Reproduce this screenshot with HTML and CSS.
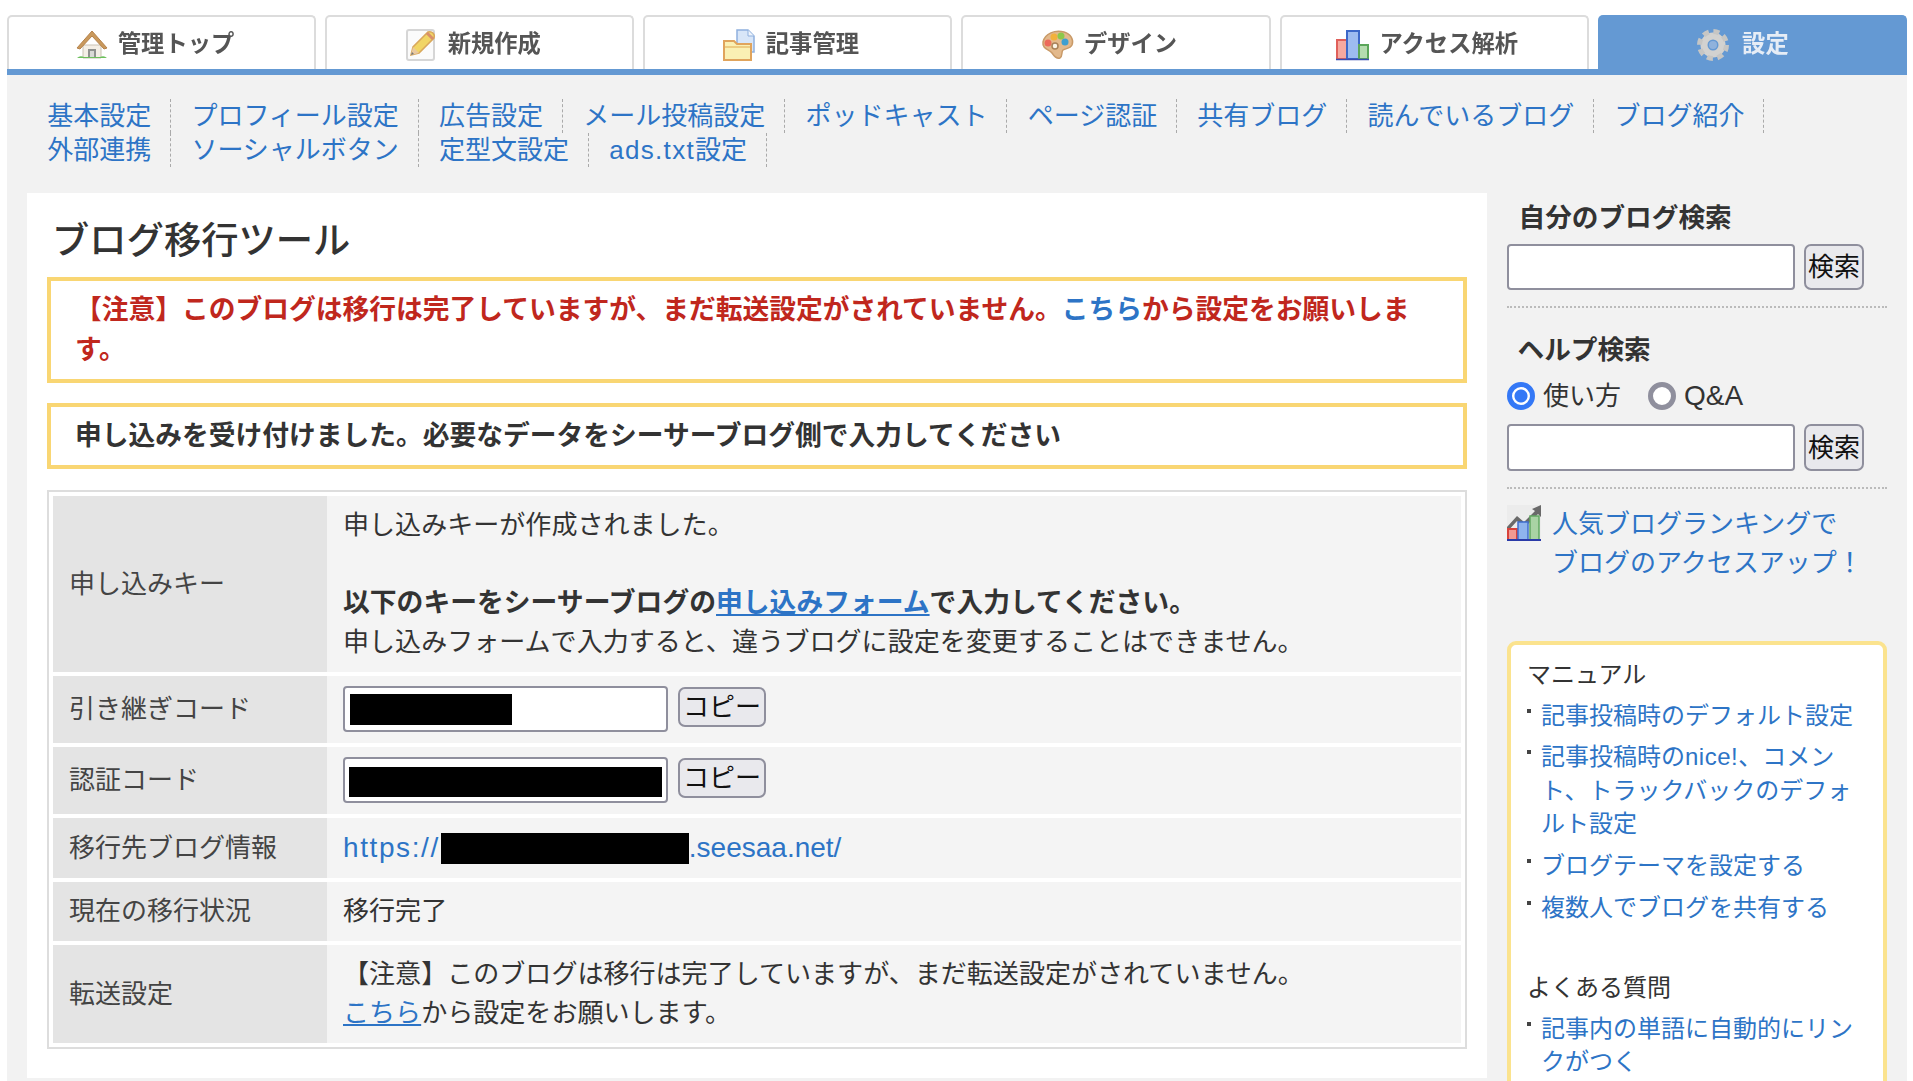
FILE: index.html
```html
<!DOCTYPE html>
<html lang="ja">
<head>
<meta charset="utf-8">
<title>ブログ移行ツール</title>
<link rel="stylesheet" href="styles.css">
</head>
<body>
<div class="page">
  <nav class="tabs">
    <a class="tab">
      <svg class="tab-icon" viewBox="6 3 34 34"><path d="M14 20h18v13H14z" fill="#f4efe6" stroke="#c9c2b4"/><path d="M19 24h8v9h-8z" fill="#8f918e"/><path d="M21 26h4v7h-4z" fill="#d9dad6"/><path d="M8 23 23 6l15 17-3 1-12-13-12 13z" fill="#c9995c" stroke="#b5814a"/><path d="M8 33q3-3 7-1h16q4-2 7 1z" fill="#6bbf5a"/></svg>
      <span>管理トップ</span>
    </a>
    <a class="tab">
      <svg class="tab-icon" viewBox="6 3 34 34"><rect x="8" y="5" width="27" height="30" rx="2" fill="#fbfbfb" stroke="#d6d6d6" stroke-width="2"/><path d="M12 30l2-8 15-15q3-1 5 1t1 5L20 28z" fill="#f1d565" stroke="#d9a85c" stroke-width="1.5"/><path d="M12 30l2-8 6 6z" fill="#e9c9a0"/><path d="M12 30l1-3 2 2z" fill="#777"/><path d="M28 8l6 6" stroke="#d98f6a" stroke-width="3"/></svg>
      <span>新規作成</span>
    </a>
    <a class="tab">
      <svg class="tab-icon" viewBox="4 3 34 34"><path d="M18 5h11l6 6v16H18z" fill="#d8e6f8" stroke="#8fb0de" stroke-width="1.5"/><path d="M29 5v6h6" fill="#eef4fc" stroke="#8fb0de"/><path d="M5 16h10l3 3h14v16H5z" fill="#faf0b4" stroke="#e0a45c" stroke-width="2"/><path d="M6 22h25" stroke="#e8c070" stroke-width="1.5"/></svg>
      <span>記事管理</span>
    </a>
    <a class="tab">
      <svg class="tab-icon" viewBox="6 3 34 34"><path d="M8 17C10 8 20 5 29 7c7 2 10 8 8 13-2 4-6 3-9 5-2 2 0 6-3 8-3 1-6-2-8-5-3-4-10-4-9-11z" fill="#e3b98c" stroke="#c99a68" stroke-width="1.5"/><circle cx="13" cy="18" r="3.5" fill="#ec6a5a"/><circle cx="19" cy="12" r="3.5" fill="#f3b13c"/><circle cx="26" cy="11" r="3.5" fill="#8cc84b"/><circle cx="30" cy="17" r="3.5" fill="#3f9fd0"/><circle cx="20" cy="21" r="3" fill="#faf3e6" stroke="#a88058" stroke-width="1.5"/></svg>
      <span>デザイン</span>
    </a>
    <a class="tab">
      <svg class="tab-icon" viewBox="4 3 34 34"><rect x="5" y="15" width="10" height="19" fill="#f6a9a0" stroke="#e0605a" stroke-width="2"/><rect x="15" y="6" width="12" height="28" fill="#9dbcf0" stroke="#3c68c8" stroke-width="2"/><rect x="27" y="20" width="9" height="14" fill="#b4dcb0" stroke="#5aa65a" stroke-width="2"/><path d="M4 34.500h33" stroke="#3a4cb0" stroke-width="1.500"/></svg>
      <span>アクセス解析</span>
    </a>
    <a class="tab tab-active">
      <svg class="tab-icon" viewBox="0 0 34 34"><circle cx="17" cy="17" r="9" fill="none" stroke="#d2d2d0" stroke-width="7"/><circle cx="17" cy="17" r="13.500" fill="none" stroke="#c6c6c4" stroke-width="5" stroke-dasharray="6 4.600"/><circle cx="17" cy="17" r="4" fill="#8fb2dc"/></svg>
      <span>設定</span>
    </a>
  </nav>
  <div class="body">
    <ul class="subnav">
      <li><a>基本設定</a></li>
      <li><a>プロフィール設定</a></li>
      <li><a>広告設定</a></li>
      <li><a>メール投稿設定</a></li>
      <li><a>ポッドキャスト</a></li>
      <li><a>ページ認証</a></li>
      <li><a>共有ブログ</a></li>
      <li><a>読んでいるブログ</a></li>
      <li><a>ブログ紹介</a></li>
      <li><a>外部連携</a></li>
      <li><a>ソーシャルボタン</a></li>
      <li><a>定型文設定</a></li>
      <li><a><span class="latin-ads">ads.txt</span>設定</a></li>
    </ul>
    <div class="columns">
      <main class="card">
        <h1 class="title">ブログ移行ツール</h1>
        <p class="alert alert-error">【注意】このブログは移行は完了していますが、まだ転送設定がされていません。<a>こちら</a>から設定をお願いします。</p>
        <p class="alert alert-info">申し込みを受け付けました。必要なデータをシーサーブログ側で入力してください</p>
        <table class="info">
          <tr>
            <th>申し込みキー</th>
            <td>申し込みキーが作成されました。<br><br><strong>以下のキーをシーサーブログの<a class="ul">申し込みフォーム</a>で入力してください。</strong><br>申し込みフォームで入力すると、違うブログに設定を変更することはできません。</td>
          </tr>
          <tr class="code-row">
            <th>引き継ぎコード</th>
            <td><div class="code"><div class="field"><span class="mask mask-short"></span></div><button class="btn btn-copy">コピー</button></div></td>
          </tr>
          <tr class="code-row">
            <th>認証コード</th>
            <td><div class="code"><div class="field"><span class="mask mask-long"></span></div><button class="btn btn-copy">コピー</button></div></td>
          </tr>
          <tr>
            <th>移行先ブログ情報</th>
            <td><a class="url"><span class="url-scheme">https://</span><span class="mask-inline"></span>.seesaa.net/</a></td>
          </tr>
          <tr>
            <th>現在の移行状況</th>
            <td>移行完了</td>
          </tr>
          <tr>
            <th>転送設定</th>
            <td>【注意】このブログは移行は完了していますが、まだ転送設定がされていません。<br><a class="ul">こちら</a>から設定をお願いします。</td>
          </tr>
        </table>
      </main>
      <aside class="side">
        <section class="side-block side-first">
          <h2 class="side-title">自分のブログ検索</h2>
          <div class="search"><input class="search-input" type="text"><button class="btn btn-search">検索</button></div>
        </section>
        <section class="side-block">
          <h2 class="side-title side-title-help">ヘルプ検索</h2>
          <div class="radios">
            <label class="radio"><input type="radio" name="h" checked><span>使い方</span></label>
            <label class="radio"><input type="radio" name="h"><span class="radio-latin">Q&amp;A</span></label>
          </div>
          <div class="search search-help"><input class="search-input" type="text"><button class="btn btn-search">検索</button></div>
        </section>
        <div class="rank">
          <svg class="rank-icon" viewBox="0 0 34 36"><rect width="34" height="36" fill="#ececec"/><path d="M0 22 10 11l7 6L28 6l-3-2 9-4v12l-3-3-13 13-8-6-10 11z" fill="#6a6a6a"/><rect x="1" y="24" width="9" height="12" fill="#f39a92" stroke="#d8433c" stroke-width="2"/><rect x="11" y="17" width="10" height="19" fill="#8fb4ee" stroke="#3f6fd0" stroke-width="1.500"/><rect x="23" y="11" width="9" height="25" fill="#a9d3a4" stroke="#62a862" stroke-width="1.500"/><path d="M0 35h34" stroke="#2a3aa8" stroke-width="2"/></svg>
          <a>人気ブログランキングで<br>ブログのアクセスアップ！</a>
        </div>
        <div class="manual">
          <h3 class="manual-title">マニュアル</h3>
          <ul class="manual-list">
            <li><a>記事投稿時のデフォルト設定</a></li>
            <li><a>記事投稿時の<span class="latin-nice">nice!</span>、コメント、トラックバックのデフォルト設定</a></li>
            <li><a>ブログテーマを設定する</a></li>
            <li><a>複数人でブログを共有する</a></li>
          </ul>
          <h3 class="manual-title manual-title-next">よくある質問</h3>
          <ul class="manual-list">
            <li><a>記事内の単語に自動的にリンクがつく</a></li>
          </ul>
        </div>
      </aside>
    </div>
  </div>
</div>
</body>
</html>
```

FILE: styles.css
```css
* { box-sizing: border-box; }
html, body { margin: 0; height: 1081px; overflow: hidden; background: #fff; }
body {
  font-family: "Liberation Sans", "Noto Sans CJK JP", sans-serif;
  font-size: 26px;
  line-height: 39px;
  color: #333;
}
a { color: #2d74c6; }
.page { margin-left: 7px; width: 1900px; padding-top: 15px; }

/* Top tabs */
.tabs { display: grid; grid-template-columns: repeat(6, 1fr); column-gap: 9px; height: 60px; border-bottom: 6px solid #6499d3; }
.tab {
  display: flex;
  align-items: center;
  justify-content: center;
  gap: 9px;
  padding: 3px 14px 0 0;
  height: 54px;
  border: 2px solid #dcdcdc;
  border-bottom: 0;
  border-radius: 5px 5px 0 0;
  background: #fff;
  color: #555;
  font-size: 23.3px;
  font-weight: 700;
  line-height: 1;
}
.tab span { filter: blur(0.6px); }
.tab-icon { width: 34px; height: 34px; flex: none; filter: blur(0.5px); }
.tab-active { background: #6499d3; border-color: #6499d3; color: #e6edf6; padding-right: 20px; gap: 12px; }

/* Sub navigation */
.body { background: #f2f2f2; height: 1006px; padding: 24px 0 0 0; }
.subnav {
  display: flex;
  flex-wrap: wrap;
  list-style: none;
  margin: 0 0 26px 20px;
  padding: 0;
  width: 1860px;
  line-height: 34px;
}
.subnav li { padding: 0 19px 0 20.2px; border-right: 1px dashed #aaa; height: 34px; }
.latin-ads { letter-spacing: 1.3px; }

/* Columns */
.columns { display: grid; grid-template-columns: 1460px 380px; column-gap: 20px; margin-left: 20px; align-items: start; }
.card { background: #fff; padding: 20px 20px 29px; }
.title { margin: 5px 0 13px 5px; font-size: 37.3px; line-height: 46px; font-weight: 500; color: #333; }

.alert { margin: 0 0 20px; border: 4px solid #f9d673; background: #fff; font-size: 26.75px; font-weight: 700; line-height: 40px; }
.alert-error { padding: 9px 40px 9px 24px; color: #c0271d; }
.alert-info { padding: 9px 24px; margin-bottom: 21px; }

/* Info table */
.info { width: 100%; border: 2px solid #ddd; border-collapse: separate; border-spacing: 0 4px; padding: 0 4px; background: #fff; }
.info th, .info td { padding: 10px 16px; vertical-align: middle; text-align: left; font-weight: 400; }
.info th { width: 274px; background: #e4e4e4; color: #444; }
.info td { background: #f4f4f4; font-size: 26.05px; }
.info strong { font-size: 26.8px; }
.ul { text-decoration: underline; }
.code-row td { padding-bottom: 11px; }
.code { display: flex; align-items: flex-start; gap: 10px; }
.field { width: 325px; height: 46px; padding: 6px 5px; border: 2px solid #8f8f9d; border-radius: 4px; background: #fff; }
.mask { display: block; background: #000; height: 31px; }
.mask-short { width: 162px; }
.mask-long { width: 313px; margin: 2px 0 0 -1px; height: 30px; }
.url { font-size: 28px; }
.url-scheme { letter-spacing: 1.6px; }
.mask-inline { display: inline-block; width: 248px; height: 31px; margin-left: 1px; background: #000; vertical-align: -7px; }
.btn { padding: 0; border: 2px solid #8f8f9d; background: #e9e9ed; color: #111; font: inherit; line-height: 1; }
.btn-copy { width: 88px; height: 40px; margin-top: 1px; border-radius: 7px; }
.btn-search { width: 60px; height: 100%; border-radius: 7px; }

/* Sidebar */
.side-block { border-bottom: 2px dotted #bbb; padding-bottom: 16px; }
.side-first { padding-top: 6px; }
.side-title { margin: 0 0 6px 11.5px; font-size: 26.67px; line-height: 39px; font-weight: 700; color: #333; }
.side-title-help { margin: 23px 0 9px 10.5px; }
.search { display: flex; gap: 9px; height: 46px; }
.search-help { height: 47px; margin-top: 11px; }
.search-input { width: 288px; height: 100%; padding: 0; border: 2px solid #8f8f9d; border-radius: 4px; background: #fff; }
.radios { display: flex; gap: 27px; height: 34px; line-height: 34px; }
.radio { display: flex; align-items: center; gap: 8px; }
.radio-latin { font-size: 28px; }
.radio input { appearance: none; width: 28px; height: 28px; margin: 0; border: 5px solid #8f8f9d; border-radius: 50%; background: #fff; }
.radio input:checked { border-color: #3478f6; background: radial-gradient(circle, #3478f6 0 6px, #fff 7px); }
.rank { display: flex; align-items: flex-start; gap: 11px; margin-top: 16px; }
.rank-icon { width: 34px; height: 36px; flex: none; }

/* Manual box */
.manual { margin-top: 58px; padding: 13px 18px 40px 16px; background: #fff; border: 4px solid #fbe38e; border-radius: 9px; font-size: 24px; line-height: 33.6px; }
.manual-title { margin: 0 0 7px 0; font-size: 24px; font-weight: 400; line-height: 33.6px; color: #333; }
.manual-title-next { margin-top: 47px; }
.manual-list { list-style: none; margin: 0; padding: 0; }
.manual-list li { position: relative; padding-left: 14px; margin-bottom: 8px; }
.manual-list li::before { content: ""; position: absolute; left: 0; top: 10px; width: 4px; height: 4px; background: #444; }
.latin-nice { letter-spacing: 0.5px; }
```
